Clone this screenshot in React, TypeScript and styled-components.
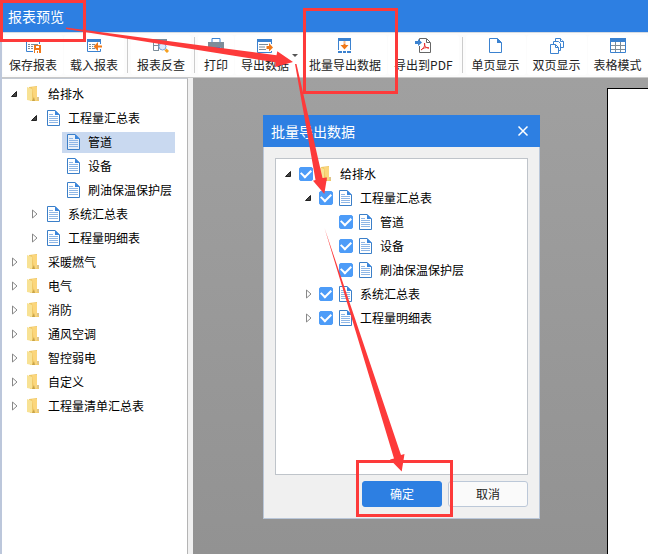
import React, { useState } from 'react';
import styled, { createGlobalStyle } from 'styled-components';

const GlobalStyle = createGlobalStyle`
  * { box-sizing: border-box; }
  body {
    margin: 0;
    overflow: hidden;
    background: #999;
    color: #000;
    font: 12px/24px "Noto Sans CJK SC", sans-serif;
  }
  button { font: inherit; color: inherit; }
`;

const Page = styled.div`
  position: relative;
  display: flex;
  flex-direction: column;
  height: 100vh;
  overflow: hidden;
`;

const TitleBar = styled.header`
  flex: none;
  height: 32px;
  padding: 0 8px;
  background: #2d7fe2;
  color: #fff;
  font-size: 14px;
  line-height: 32px;
`;

const Heading = styled.h1`
  margin: 0;
  font: inherit;
`;

const Frame = styled.div`
  flex: 1;
  min-height: 0;
  display: flex;
  flex-direction: column;
  border-left: 2px solid #bcc7db;
`;

const Toolbar = styled.div`
  flex: none;
  display: flex;
  gap: 1px;
  height: 46px;
  padding: 2px 0 2px 1px;
  border-top: 1px solid #d5dbe3;
  border-bottom: 1px solid #c8c8c8;
  background: #fcfcfc;
`;

const ToolButton = styled.button<{ $menu?: boolean }>`
  position: relative;
  flex: none;
  display: flex;
  flex-direction: column;
  align-items: center;
  padding: 3px ${p => (p.$menu ? 13 : 6)}px 0 6px;
  border: 0;
  border-radius: 3px;
  background: #fff;
  color: #222;
  line-height: 20px;
  white-space: nowrap;
  svg { display: block; margin-bottom: 1px; }
`;

const MenuMark = styled.span`
  position: absolute;
  right: 4px;
  top: 19px;
  border: 3px solid transparent;
  border-top-color: #555;
  border-bottom: 0;
`;

const Divider = styled.span`
  flex: none;
  width: 1px;
  height: 36px;
  margin: 2px 2px 0;
  background: #ccc;
`;

const Workspace = styled.div`
  flex: 1;
  min-height: 0;
  display: flex;
`;

const Sidebar = styled.nav`
  flex: none;
  width: 186px;
  padding: 3px 12px 0 4px;
  border-top: 1px solid #c3c9d2;
  border-right: 1px solid #b4b4b4;
  background: #fff;
`;

const Splitter = styled.div`
  flex: none;
  width: 5px;
  background: #f0f0f0;
`;

const Canvas = styled.main`
  flex: 1;
  min-width: 0;
  display: flex;
  padding: 10px 0 0 414px;
  background: linear-gradient(#a0a0a0, #929292);
`;

const Sheet = styled.div`
  flex: 1;
  border: solid #000;
  border-width: 1px 0 0 1px;
  background: #fff;
`;

const Row = styled.div<{ $level: number }>`
  display: flex;
  align-items: center;
  height: 24px;
  padding-left: ${p => p.$level * 20}px;
`;

const Toggle = styled.button`
  flex: none;
  display: flex;
  align-items: center;
  justify-content: center;
  width: 16px;
  height: 16px;
  padding: 0;
  border: 0;
  background: none;
`;

const ToggleSpace = styled.span`
  flex: none;
  width: 16px;
`;

const Node = styled.button<{ $selected?: boolean }>`
  flex: 1;
  display: flex;
  align-items: center;
  gap: 8px;
  height: 21px;
  padding: 0 0 0 5px;
  border: 0;
  background: ${p => (p.$selected ? '#c9d9f0' : 'none')};
  line-height: 20px;
  text-align: left;
  white-space: nowrap;
  svg { flex: none; }
`;

const CheckLabel = styled.label`
  display: flex;
  align-items: center;
  padding-left: 3px;
  white-space: nowrap;
  svg { flex: none; margin: 0 8px 0 6px; }
`;

const CheckBox = styled.input`
  appearance: none;
  flex: none;
  display: flex;
  align-items: center;
  justify-content: center;
  width: 14px;
  height: 14px;
  margin: 0;
  border: 1px solid #4d9cf8;
  border-radius: 2px;
  background: #fff;
  &:checked { background: #4d9cf8; }
  &:checked::after {
    content: '';
    width: 8px;
    height: 5px;
    margin-bottom: 3px;
    border: solid #fff;
    border-width: 0 0 2px 2px;
    transform: rotate(-45deg);
  }
`;

const Dialog = styled.section`
  position: absolute;
  left: 263px;
  top: 115px;
  width: 277px;
  background: #f0f0f0;
  box-shadow: inset 0 0 0 1px #b9c6d8;
`;

const DialogBar = styled.header`
  display: flex;
  align-items: center;
  justify-content: space-between;
  height: 32px;
  padding: 0 11px 0 8px;
  background: #2d7fe2;
  color: #fff;
  font-size: 14px;
`;

const DialogTitle = styled.h2`
  margin: 0;
  font: inherit;
`;

const CloseButton = styled.button`
  display: flex;
  padding: 0;
  border: 0;
  background: none;
`;

const DialogBody = styled.div`
  padding: 11px 12px 12px;
`;

const ListBox = styled.div`
  height: 317px;
  padding: 3px 4px;
  border: 1px solid #bfc4ca;
  background: #fff;
`;

const Actions = styled.div`
  display: flex;
  justify-content: flex-end;
  gap: 6px;
  margin-top: 6px;
`;

const ActionButton = styled.button<{ $primary?: boolean }>`
  width: 80px;
  height: 26px;
  padding: 0;
  border: 1px solid ${p => (p.$primary ? '#2d7fe2' : '#bcc8d8')};
  border-radius: 3px;
  background: ${p => (p.$primary ? '#2d7fe2' : '#fafafa')};
  color: ${p => (p.$primary ? '#fff' : '#222')};
  line-height: 24px;
`;

const Markup = styled.svg`
  position: absolute;
  left: 0;
  top: 0;
  pointer-events: none;
`;

const blue = '#3b82d0';
const grey = '#7d8d99';
const orange = '#f07818';

const Icon = ({ children }: { children: React.ReactNode }) => (
  <svg width="16" height="16" viewBox="0 0 16 16" fill="none" aria-hidden="true">{children}</svg>
);

const SaveIcon = () => (
  <Icon>
    <path d="M1 1h14v3H1z" fill={blue} />
    <path d="M1.500 2v11.500H8M14.500 2v4" stroke={blue} />
    <path d="M3 6.500h2m1 0h7M3 8.500h2m1 0h2M3 10.500h2m1 0h2" stroke={grey} />
    <path d="M9 7h7v8H9z" fill={orange} />
    <path d="M11 8h3v2h-3zM10 12h4v3h-4z" fill="#fff" />
    <path d="M12 13h1v2h-1z" fill={orange} />
  </Icon>
);
const LoadIcon = () => (
  <Icon>
    <path d="M1 1h14v3H1z" fill={blue} />
    <path d="M1.500 2v11.500h13V11M14.500 3v3" stroke={blue} />
    <path d="M3 6.500h2m1 0h3M3 8.500h2m1 0h1M3 10.500h2m1 0h3" stroke={grey} />
    <path d="M7.500 8.500 12 4v3.500h4v2h-4V13z" fill={orange} />
  </Icon>
);
const TraceIcon = () => (
  <Icon>
    <path d="M0 1h14v3H0z" fill={grey} />
    <path d="M.5 2v10.500H6M.5 7.500H6M5.500 3v10M13.500 3v4" stroke={grey} />
    <circle cx="9.500" cy="8.500" r="3.500" fill="#dcebfc" stroke="#76a5dc" />
    <path d="m12.500 11.500 2.500 2.500" stroke="#f5a020" strokeWidth="3" />
  </Icon>
);
const PrintIcon = () => (
  <Icon>
    <path d="M4 5V.5h8V5" stroke={blue} />
    <path d="M0 4h16v7h-3v-2H3v2H0z" fill={grey} />
    <path d="M3.500 9.500h9v4h-9z" fill="#fff" stroke={blue} />
  </Icon>
);
const ExportIcon = () => (
  <Icon>
    <path d="M0 1h15v3H0z" fill={blue} />
    <path d="M.5 3v11.500h14V13M14.500 3v3" stroke={blue} />
    <path d="M2 6.500h9M2 9h6M2 11.500h7" stroke={grey} />
    <path d="M9.500 8H12V5l4 4.500-4 4V11H9.500z" fill={orange} />
  </Icon>
);
const BatchIcon = () => (
  <Icon>
    <path d="M1 0h13v3H1z" fill={blue} />
    <path d="M1.500 2v10M13.500 2v10" stroke={blue} />
    <path d="M1 13h4v2H1zm5 0h3v2H6zm4 0h4v2h-4z" fill={blue} />
    <path d="M6.500 3.500h2v1h-2zm0 2h2V7h3L7.500 11.500 3.500 7h3z" fill={orange} />
  </Icon>
);
const PdfIcon = () => (
  <Icon>
    <path d="M4.500 3V.5h7l4 4v10h-11V8M11.500 1v3.500H15" stroke="#666" />
    <path d="M0 3h3V1l4 3.500L3 8V6H0z" fill={blue} />
    <path d="M9.500 5c1 3-1 5-3.500 7 2-2 5-3 8-2-3 0-5-2-4.500-5z" stroke="#e83030" />
  </Icon>
);
const SinglePageIcon = () => (
  <Icon>
    <path d="M1.500.5h8l4 4v10h-12z" stroke={blue} />
    <path d="M9 0v5h5z" fill={blue} />
  </Icon>
);
const MultiPageIcon = () => (
  <Icon>
    <path d="M6.500.5h5l3 3v6h-8z" fill="#fff" stroke={blue} />
    <path d="M11.500.5v3h3M4.500 3.500h5l2 2v7h-7z" fill="#fff" stroke={blue} />
    <path d="M1.500 6.500h5l3 3v6h-8z" fill="#fff" stroke={blue} />
    <path d="M6.500 6.500v3h3" stroke={blue} />
  </Icon>
);
const GridIcon = () => (
  <Icon>
    <path d="M1 7.500h14M1 11.500h14M5.500 3v11M10.500 3v11" stroke={grey} />
    <path d="M.5 3v11.500h15V3" stroke={blue} />
    <path d="M0 0h16v4H0z" fill={blue} />
  </Icon>
);

const FolderIcon = () => (
  <svg width="13" height="16" viewBox="0 0 13 16" aria-hidden="true">
    <path d="M2 1 10 0v11l2 1v3H3z" fill="#efc866" />
    <path d="M5 1h5v10l2 1v2l-5 1z" fill="#fbd67c" />
    <path d="M0 1l5 2v12l-5-1z" fill="#f8e294" />
    <path d="M5 15l2-4 1 4z" fill="#c8a449" />
    <path d="M10 11h2v3h-2z" fill="#dfc58a" />
  </svg>
);

const FileIcon = () => (
  <svg width="13" height="16" viewBox="0 0 13 16" fill="none" aria-hidden="true">
    <path d="M.5.5H8l4.500 4.500v10.500H.5z" fill="#fff" fillOpacity=".6" stroke="#3b7fc8" />
    <path d="M8 0l5 5H8z" fill="#3b86dc" />
    <path d="M2 4.500h4M2 6.500h9M2 8.500h9M2 10.500h9M2 12.500h9" stroke="#8fb7e6" />
  </svg>
);

const Chevron = ({ open }: { open: boolean }) => (
  <svg width="8" height="10" viewBox="0 0 8 10" aria-hidden="true">
    {open
      ? <path d="M6.500 2.500v5h-5z" fill="#444" stroke="#222" />
      : <path d="M2.500 1v8L7 5z" fill="#fff" stroke="#888" />}
  </svg>
);

type Item = { label: string; level: number; open?: boolean; folder?: boolean };

const reports: Item[] = [
  { label: '给排水', level: 0, open: true, folder: true },
  { label: '工程量汇总表', level: 1, open: true },
  { label: '管道', level: 2 },
  { label: '设备', level: 2 },
  { label: '刷油保温保护层', level: 2 },
  { label: '系统汇总表', level: 1, open: false },
  { label: '工程量明细表', level: 1, open: false },
];

const groups: Item[] = ['采暖燃气', '电气', '消防', '通风空调', '智控弱电', '自定义', '工程量清单汇总表']
  .map(label => ({ label, level: 0, open: false, folder: true }));

const Expander = ({ item }: { item: Item }) =>
  item.open === undefined
    ? <ToggleSpace />
    : <Toggle type="button" aria-label={item.label} aria-expanded={item.open}><Chevron open={item.open} /></Toggle>;

const ItemIcon = ({ item }: { item: Item }) => (item.folder ? <FolderIcon /> : <FileIcon />);

export default function App() {
  const [selected, setSelected] = useState('管道');

  return (
    <Page>
      <GlobalStyle />
      <TitleBar><Heading>报表预览</Heading></TitleBar>
      <Frame>
        <Toolbar role="toolbar">
          <ToolButton><SaveIcon />保存报表</ToolButton>
          <ToolButton><LoadIcon />载入报表</ToolButton>
          <Divider />
          <ToolButton><TraceIcon />报表反查</ToolButton>
          <Divider />
          <ToolButton><PrintIcon />打印</ToolButton>
          <ToolButton $menu><ExportIcon />导出数据<MenuMark /></ToolButton>
          <ToolButton><BatchIcon />批量导出数据</ToolButton>
          <ToolButton><PdfIcon />导出到PDF</ToolButton>
          <Divider />
          <ToolButton><SinglePageIcon />单页显示</ToolButton>
          <ToolButton><MultiPageIcon />双页显示</ToolButton>
          <ToolButton><GridIcon />表格模式</ToolButton>
        </Toolbar>
        <Workspace>
          <Sidebar>
            {[...reports, ...groups].map(item => (
              <Row key={item.label} $level={item.level}>
                <Expander item={item} />
                <Node type="button" $selected={selected === item.label} onClick={() => setSelected(item.label)}>
                  <ItemIcon item={item} />{item.label}
                </Node>
              </Row>
            ))}
          </Sidebar>
          <Splitter />
          <Canvas><Sheet /></Canvas>
        </Workspace>
      </Frame>

      <Dialog role="dialog" aria-labelledby="dialog-title">
        <DialogBar>
          <DialogTitle id="dialog-title">批量导出数据</DialogTitle>
          <CloseButton type="button" aria-label="关闭">
            <svg width="12" height="12" viewBox="0 0 12 12" aria-hidden="true">
              <path d="M1.500 1.500l9 9m0-9l-9 9" stroke="#fff" strokeWidth="1.500" />
            </svg>
          </CloseButton>
        </DialogBar>
        <DialogBody>
          <ListBox>
            {reports.map(item => (
              <Row key={item.label} $level={item.level}>
                <Expander item={item} />
                <CheckLabel>
                  <CheckBox type="checkbox" defaultChecked />
                  <ItemIcon item={item} />{item.label}
                </CheckLabel>
              </Row>
            ))}
          </ListBox>
          <Actions>
            <ActionButton type="button" $primary>确定</ActionButton>
            <ActionButton type="button">取消</ActionButton>
          </Actions>
        </DialogBody>
      </Dialog>

      <Markup width="648" height="554" viewBox="0 0 648 554" aria-hidden="true">
        <g fill="none" stroke="#fd3a3a" strokeWidth="3">
          <path d="M1.500 1.500h83v39h-83z" />
          <path d="M304.500 9.500h92v83h-92z" />
          <path d="M357.500 461.500h94v54h-94z" />
        </g>
        <g fill="#fd3a3a">
          <path d="M66 27.500 200 45.300 276.500 55.300 277.300 51.300 293 62 275 67 275.500 62.300 66 29z" />
          <path d="M295 64 296.500 64 322.500 178 327 177.500 324.300 194 313 180.700 315.500 180z" />
          <path d="M324.500 228 401 455 404.500 454 401.700 471.500 390 459.500 394 458.500z" />
        </g>
      </Markup>
    </Page>
  );
}
